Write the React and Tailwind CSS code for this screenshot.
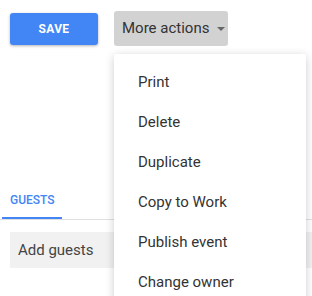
import React from 'react';

const actions = ['Print', 'Delete', 'Duplicate', 'Copy to Work', 'Publish event', 'Change owner'];

export default function App() {
  return (
    <div className="h-[296px] w-[312px] overflow-hidden bg-white font-['Roboto',sans-serif]">
      <div className="flex items-center gap-4 pl-[10px] pt-[11px]">
        <button className="h-8 w-[88px] rounded-[3px] bg-[#4285f4] text-[12px] font-bold tracking-wide text-white shadow-[0_1px_3px_rgba(0,0,0,0.3)]">
          SAVE
        </button>
        <div className="relative">
          <button className="flex h-[35px] w-[114px] items-center rounded-[3px] bg-[#d2d2d2] pl-2 text-[15px] text-[#333]">
            More actions
            <svg width="8" height="4" viewBox="0 0 8 4" className="ml-2">
              <path d="M0 0h8L4 4z" fill="#666" />
            </svg>
          </button>
          <div className="absolute left-0 top-[43px] z-10 w-[192px] rounded-[2px] bg-white py-2 shadow-[0_2px_10px_rgba(0,0,0,0.2)]">
            {actions.map((a) => (
              <div key={a} className="flex h-10 items-center pl-6 text-[15px] text-[#333]">
                {a}
              </div>
            ))}
          </div>
        </div>
      </div>

      <div className="mt-[136px] border-b border-[#e0e0e0]">
        <div className="ml-[2px] flex h-[37px] w-[60px] items-center border-b-2 border-[#4285f4] pl-2 text-[12px] font-medium text-[#4285f4]">
          GUESTS
        </div>
      </div>

      <div className="ml-[10px] mt-3 flex h-9 items-center bg-[#f1f1f1] pl-2 text-[15px] text-[#444]">
        Add guests
      </div>
    </div>
  );
}
